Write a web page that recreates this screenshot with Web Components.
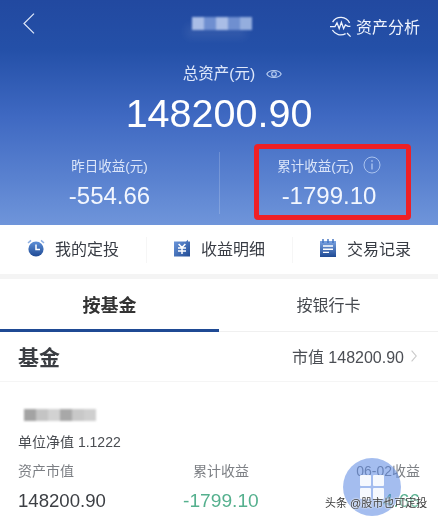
<!DOCTYPE html>
<html lang="zh">
<head>
<meta charset="utf-8">
<title>资产</title>
<style>
  html, body { margin: 0; background: #fff; }
  body {
    width: 438px; height: 519px; overflow: hidden;
    font-family: "Liberation Sans", "Noto Sans CJK SC", sans-serif;
  }
</style>
</head>
<body>
<asset-page></asset-page>

<script>
// blurred out block of text, colours passed as an attribute
class MosaicBlur extends HTMLElement {
  connectedCallback() {
    const colors = this.getAttribute('colors').split(',');
    const cells = colors.map(c => `<i style="background:${c}"></i>`).join('');
    this.attachShadow({ mode: 'open' }).innerHTML = `
      <style>
        :host { display: inline-flex; filter: blur(1.2px); }
        i { display: block; width: var(--cell, 12px); height: var(--cell-h, 12px); }
      </style>${cells}`;
  }
}
customElements.define('mosaic-blur', MosaicBlur);

class TopNav extends HTMLElement {
  connectedCallback() {
    this.attachShadow({ mode: 'open' }).innerHTML = `
      <style>
        :host { display: flex; align-items: center; justify-content: space-between; height: 52px; padding: 0 18px 0 23px; color: #eef3fd; }
        .back { width: 12px; height: 21px; margin-top: -6px; }
        .title { position: absolute; left: 192px; top: 17px; --cell: 12px; --cell-h: 13px; box-shadow: -6px 8px 8px rgba(255,255,255,.07); }
        .right { display: flex; align-items: center; gap: 3px; font-size: 16px; }
        svg { display: block; }
      </style>
      <svg class="back" viewBox="0 0 12 21" fill="none" stroke="#dfe8fa" stroke-width="1.2"><path d="M11 .6 L1 10.5 L11 20.4"/></svg>
      <mosaic-blur class="title" colors="#a9bde6,#6f8fd0,#a9bde6,#6f8fd0,#94aede"></mosaic-blur>
      <div class="right">
        <svg width="24" height="24" viewBox="0 0 24 24" fill="none" stroke="#eef3fd" stroke-width="1.3">
          <path d="M3.6 8.2 A9.6 9.6 0 0 1 20.6 9"/>
          <path d="M3.4 16 A9.6 9.6 0 0 0 16.6 19.6"/>
          <path d="M1 12.6 H6 L8 8.8 L10.2 14.6 L12.4 8.2 L14.6 14.6 L16.4 11 L19 12.4 H21.4"/>
          <path d="M18 19 L21.6 22.6"/>
        </svg>
        <span>资产分析</span>
      </div>`;
  }
}
customElements.define('top-nav', TopNav);

class TotalAssets extends HTMLElement {
  connectedCallback() {
    this.attachShadow({ mode: 'open' }).innerHTML = `
      <style>
        :host { display: block; text-align: center; color: #fff; }
        .label { height: 40px; display: flex; align-items: center; justify-content: center; gap: 11px; font-size: 15.5px; color: #dfe8fa; padding-left: 27px; }
        .label svg { margin-top: 3px; }
        .amount { height: 42px; line-height: 42px; font-size: 39.5px; letter-spacing: 0; }
      </style>
      <div class="label">
        <span>总资产(元)</span>
        <svg width="16" height="12" viewBox="0 0 16 12" fill="none" stroke="#bcd0f2" stroke-width="1.1">
          <path d="M.8 6 C3.5 1.4 12.5 1.4 15.2 6 C12.5 10.6 3.5 10.6 .8 6 Z"/>
          <circle cx="8" cy="6" r="2.3"/>
        </svg>
      </div>
      <div class="amount">148200.90</div>`;
  }
}
customElements.define('total-assets', TotalAssets);

class StatBlock extends HTMLElement {
  connectedCallback() {
    this.attachShadow({ mode: 'open' }).innerHTML = `
      <style>
        :host { display: block; text-align: center; }
        .label { height: 26px; display: flex; align-items: center; justify-content: center; gap: 9px; font-size: 13.5px; color: #dbe5f9; }
        .value { height: 36px; line-height: 36px; font-size: 24px; color: #f2f6fe; }
      </style>
      <div class="label"><span>${this.getAttribute('label')}</span><slot name="icon"></slot></div>
      <div class="value">${this.getAttribute('value')}</div>`;
  }
}
customElements.define('stat-block', StatBlock);

class StatsRow extends HTMLElement {
  connectedCallback() {
    this.attachShadow({ mode: 'open' }).innerHTML = `
      <style>
        :host { display: grid; grid-template-columns: 219px 219px; padding: 18px 0 11px; position: relative; }
        ::slotted(:nth-child(2)) { border-left: 1px solid rgba(255,255,255,.18); }
        /* the red marker drawn on top of the screenshot */
        .marker { position: absolute; left: 254px; top: 10px; width: 157px; height: 76px; box-sizing: border-box; border: 5px solid #ee2026; border-radius: 4px; }
      </style>
      <slot></slot>
      <div class="marker"></div>`;
  }
}
customElements.define('stats-row', StatsRow);

class ActionItem extends HTMLElement {
  connectedCallback() {
    this.attachShadow({ mode: 'open' }).innerHTML = `
      <style>
        :host { display: flex; align-items: center; justify-content: center; gap: 10px; padding-bottom: 3px; font-size: 16px; color: #383c44; }
        ::slotted(svg) { display: block; }
      </style>
      <slot name="icon"></slot><span><slot></slot></span>`;
  }
}
customElements.define('action-item', ActionItem);

class ActionBar extends HTMLElement {
  connectedCallback() {
    this.attachShadow({ mode: 'open' }).innerHTML = `
      <style>
        :host { display: grid; grid-template-columns: 146px 146px 146px; height: 49px; background: #fff; border-bottom: 5px solid #f4f4f4; }
        ::slotted(:nth-child(n+2)) { background: linear-gradient(#f6f6f6, #f6f6f6) left center / 1px 26px no-repeat; }
      </style>
      <slot></slot>`;
  }
}
customElements.define('action-bar', ActionBar);

class TabBar extends HTMLElement {
  connectedCallback() {
    this.attachShadow({ mode: 'open' }).innerHTML = `
      <style>
        :host { display: grid; grid-template-columns: 219px 219px; height: 53px; box-sizing: border-box; border-bottom: 1px solid #f0f0f0; }
        .tab { display: flex; align-items: center; justify-content: center; padding-bottom: 3px; font-size: 16px; color: #45484e; }
        .on { font-weight: 700; font-size: 18px; color: #333; border-bottom: 3px solid #1f4a94; height: 50px; padding-bottom: 0; }
      </style>
      <div class="tab on">按基金</div>
      <div class="tab">按银行卡</div>`;
  }
}
customElements.define('tab-bar', TabBar);

class FundHeader extends HTMLElement {
  connectedCallback() {
    this.attachShadow({ mode: 'open' }).innerHTML = `
      <style>
        :host { display: flex; align-items: center; justify-content: space-between; height: 47px; padding: 0 21px 2px 18px; border-bottom: 1px solid #f5f5f5; color: #3a3d42; }
        b { font-size: 21px; }
        .worth { display: flex; align-items: center; gap: 7px; font-size: 16px; color: #4b4e54; }
      </style>
      <b>基金</b>
      <div class="worth">
        <span>市值 148200.90</span>
        <svg width="6" height="12" viewBox="0 0 6 12" fill="none" stroke="#c9c9c9" stroke-width="1.1"><path d="M.6 .6 L5.2 6 L.6 11.4"/></svg>
      </div>`;
  }
}
customElements.define('fund-header', FundHeader);

class FundItem extends HTMLElement {
  connectedCallback() {
    this.attachShadow({ mode: 'open' }).innerHTML = `
      <style>
        :host { display: block; padding: 20px 18px 0; }
        .name { display: flex; height: 20px; --cell: 12px; --cell-h: 12px; padding: 7px 0 0 6px; box-sizing: border-box; }
        .nav { margin-top: 7px; height: 26px; line-height: 26px; font-size: 14px; color: #4a4d52; }
        .grid { display: grid; grid-template-columns: 175px 1fr auto; margin-top: 3px; }
        .cap { height: 26px; line-height: 26px; font-size: 14px; color: #7c7f84; }
        .val { height: 34px; line-height: 34px; font-size: 18.6px; color: #3c3f44; }
        .gain { margin-left: -10px; font-size: 19.2px; color: #55b08e; }
        .end { text-align: right; }
      </style>
      <mosaic-blur class="name" colors="#a3a3a3,#c4c4c4,#d2d2d2,#a8a8a8,#c8c8c8,#cfcfcf"></mosaic-blur>
      <div class="nav">单位净值 1.1222</div>
      <div class="grid">
        <div class="cap">资产市值</div><div class="cap">累计收益</div><div class="cap end">06-02收益</div>
        <div class="val">148200.90</div><div class="val gain">-1799.10</div><div class="val end gain">-4.66</div>
      </div>`;
  }
}
customElements.define('fund-item', FundItem);

class FloatButton extends HTMLElement {
  connectedCallback() {
    this.attachShadow({ mode: 'open' }).innerHTML = `
      <style>
        :host { position: absolute; left: 343px; top: 458px; width: 58px; height: 58px; border-radius: 50%; background: rgba(90,135,225,.55); display: grid; grid-template-columns: 11px 11px; grid-auto-rows: 11px; gap: 2px; place-content: center; }
        i { display: block; background: rgba(255,255,255,.9); border-radius: 1px; }
      </style>
      <i></i><i></i><i></i><i></i>`;
  }
}
customElements.define('float-button', FloatButton);

class WaterMark extends HTMLElement {
  connectedCallback() {
    this.attachShadow({ mode: 'open' }).innerHTML = `
      <style>
        :host { position: absolute; left: 325px; top: 495px; font-size: 11px; line-height: 16px; white-space: nowrap; color: #3b3b3b; text-shadow: 0 0 2px #fff, 0 0 2px #fff; }
      </style>
      <span>头条 @股市也可定投</span>`;
  }
}
customElements.define('water-mark', WaterMark);

class AssetPage extends HTMLElement {
  connectedCallback() {
    this.attachShadow({ mode: 'open' }).innerHTML = `
      <style>
        :host { display: block; position: relative; width: 438px; height: 519px; overflow: hidden; background: #fff; filter: blur(.35px); }
        .hero { height: 225px; background: linear-gradient(180deg, #2249a0 0%, #2450a8 22%, #3f69c2 52%, #5a82d0 80%, #6f95da 100%); }
      </style>
      <div class="hero">
        <top-nav></top-nav>
        <total-assets></total-assets>
        <stats-row>
          <stat-block label="昨日收益(元)" value="-554.66"></stat-block>
          <stat-block label="累计收益(元)" value="-1799.10">
            <svg slot="icon" style="display:block" width="18" height="18" viewBox="0 0 18 18" fill="none" stroke="#a9c2ee" stroke-width="1">
              <circle cx="9" cy="9" r="8"/><path d="M9 7.6 V13.6" stroke-width="1.4"/><path d="M9 4.2 V5.8" stroke-width="1.6"/>
            </svg>
          </stat-block>
        </stats-row>
      </div>
      <action-bar>
        <action-item>
          <svg slot="icon" width="18" height="18" viewBox="0 0 18 18">
            <defs><linearGradient id="a" x1="0" y1="0" x2="0" y2="1"><stop offset="0" stop-color="#5d8fd8"/><stop offset="1" stop-color="#1f4a94"/></linearGradient></defs>
            <path d="M1 4 L4 1.4 M17 4 L14 1.4" stroke="#8fb0e2" stroke-width="1.6"/>
            <circle cx="9" cy="10" r="7.6" fill="url(#a)"/>
            <path d="M9 5.6 V10.4 H13" fill="none" stroke="#fff" stroke-width="1.5"/>
          </svg>
          我的定投
        </action-item>
        <action-item>
          <svg slot="icon" width="18" height="18" viewBox="0 0 18 18">
            <defs><linearGradient id="b" x1="0" y1="0" x2="1" y2="1"><stop offset="0" stop-color="#6f9ade"/><stop offset="1" stop-color="#1f4a94"/></linearGradient></defs>
            <path d="M1 2.5 H13 L15 .8 V2.5 H17 V17.5 H1 Z" fill="url(#b)"/>
            <path d="M5.6 5 L9 8.6 L12.4 5 M5 9 H13 M5 12 H13 M9 8.6 V15" fill="none" stroke="#fff" stroke-width="1.5"/>
          </svg>
          收益明细
        </action-item>
        <action-item>
          <svg slot="icon" width="18" height="18" viewBox="0 0 18 18">
            <defs><linearGradient id="c" x1="0" y1="0" x2="0" y2="1"><stop offset="0" stop-color="#7ba3e2"/><stop offset="1" stop-color="#1f4a94"/></linearGradient></defs>
            <rect x="1" y="2" width="16" height="16" fill="url(#c)"/>
            <path d="M4 0 V4 M9 0 V4 M14 0 V4" stroke="#3f6fbe" stroke-width="1.4"/>
            <path d="M4 7 H14 M4 10.2 H14 M4 13.4 H10" stroke="#fff" stroke-width="1.4"/>
          </svg>
          交易记录
        </action-item>
      </action-bar>
      <tab-bar></tab-bar>
      <fund-header></fund-header>
      <fund-item></fund-item>
      <float-button></float-button>
      <water-mark></water-mark>`;
  }
}
customElements.define('asset-page', AssetPage);
</script>
</body>
</html>
